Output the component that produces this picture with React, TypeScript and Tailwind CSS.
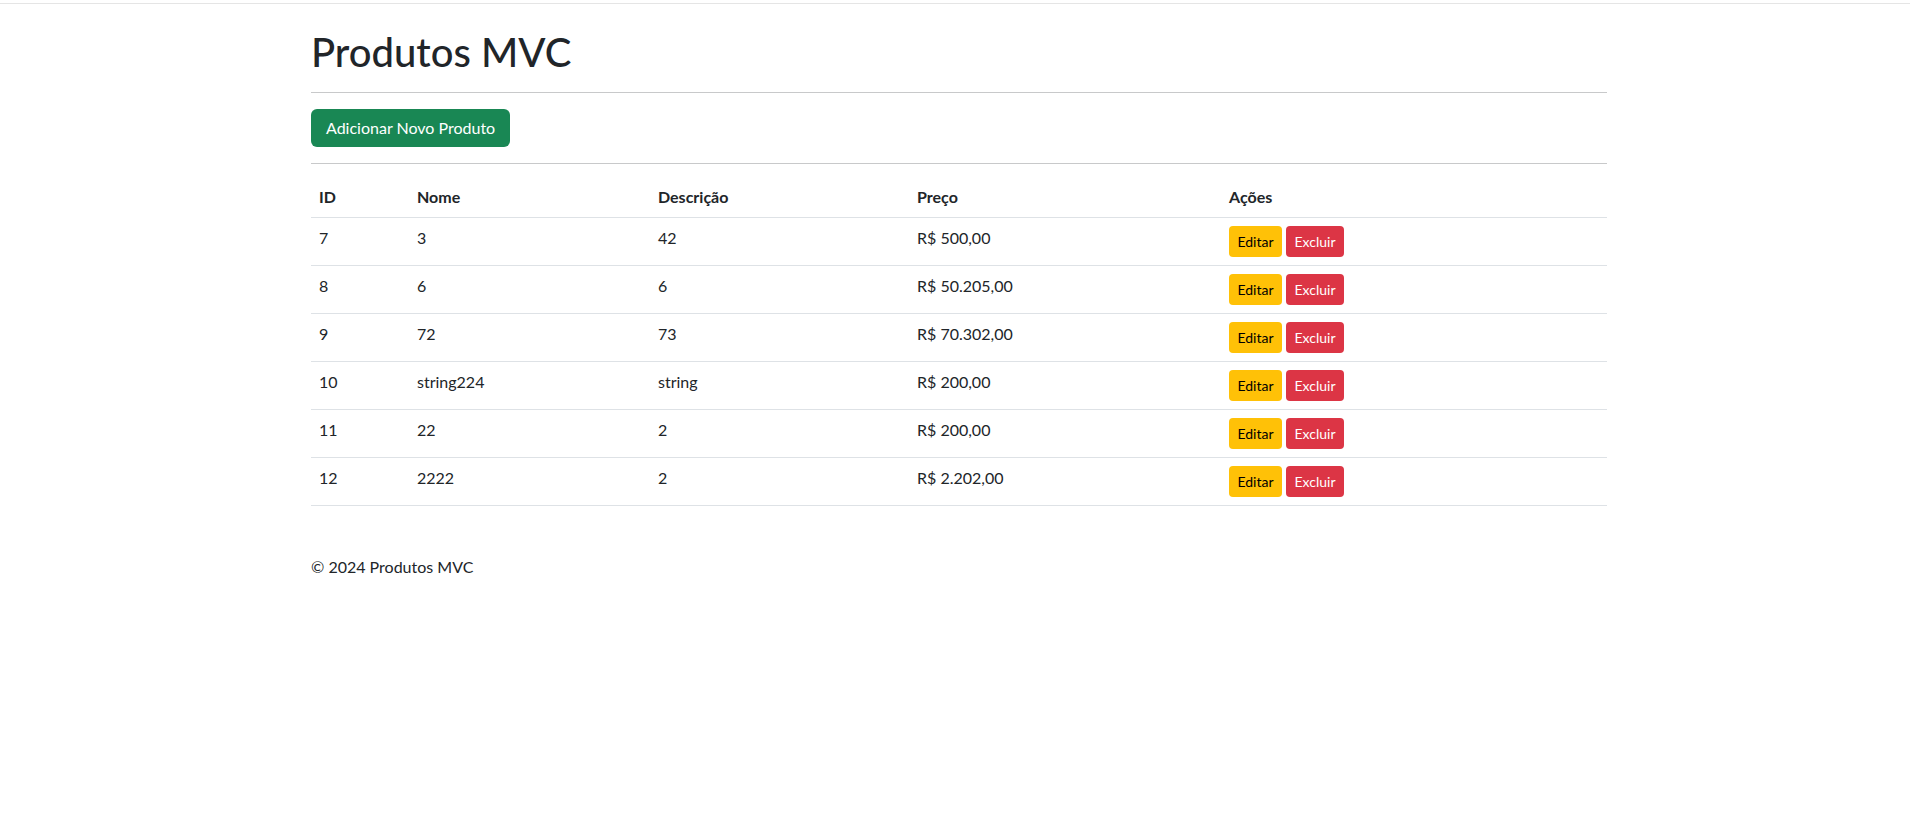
const produtos = [
  { id: 7, nome: '3', descricao: '42', preco: 'R$ 500,00' },
  { id: 8, nome: '6', descricao: '6', preco: 'R$ 50.205,00' },
  { id: 9, nome: '72', descricao: '73', preco: 'R$ 70.302,00' },
  { id: 10, nome: 'string224', descricao: 'string', preco: 'R$ 200,00' },
  { id: 11, nome: '22', descricao: '2', preco: 'R$ 200,00' },
  { id: 12, nome: '2222', descricao: '2', preco: 'R$ 2.202,00' },
]

export default function App() {
  return (
    <div className="min-h-screen bg-white text-[#212529] font-['Lato','Liberation_Sans',sans-serif]">
      <div className="h-[4px] border-b border-[#e5e5e5]" />

      <main className="ml-[311px] w-[1296px]">
        <h1 className="mt-[24px] text-[40px] leading-[48px] font-medium">Produtos MVC</h1>
        <hr className="mt-[16px] border-t border-[#c8c9ca]" />

        <div className="mt-[16px]">
          <button className="h-[38px] rounded-[6px] bg-[#198754] px-[15px] text-[16px] text-white">
            Adicionar Novo Produto
          </button>
        </div>
        <hr className="mt-[16px] border-t border-[#c8c9ca]" />

        <table className="mt-[13px] w-full table-fixed border-collapse text-[16px] leading-[24px]">
          <thead>
            <tr className="border-b border-[#dee2e6] text-left">
              <th className="w-[98px] px-2 py-2 font-bold">ID</th>
              <th className="w-[241px] px-2 py-2 font-bold">Nome</th>
              <th className="w-[259px] px-2 py-2 font-bold">Descrição</th>
              <th className="w-[312px] px-2 py-2 font-bold">Preço</th>
              <th className="px-2 py-2 font-bold">Ações</th>
            </tr>
          </thead>
          <tbody>
            {produtos.map((p) => (
              <tr key={p.id} className="border-b border-[#dee2e6] align-top">
                <td className="px-2 py-2">{p.id}</td>
                <td className="px-2 py-2">{p.nome}</td>
                <td className="px-2 py-2">{p.descricao}</td>
                <td className="px-2 py-2">{p.preco}</td>
                <td className="px-2 py-2">
                  <div className="flex gap-[4px]">
                    <button className="h-[31px] w-[53px] rounded-[4px] bg-[#ffc107] text-[14px] text-black">
                      Editar
                    </button>
                    <button className="h-[31px] w-[58px] rounded-[4px] bg-[#dc3545] text-[14px] text-white">
                      Excluir
                    </button>
                  </div>
                </td>
              </tr>
            ))}
          </tbody>
        </table>

        <footer className="mt-[49px] text-[16px] leading-[24px]">© 2024 Produtos MVC</footer>
      </main>
    </div>
  )
}
